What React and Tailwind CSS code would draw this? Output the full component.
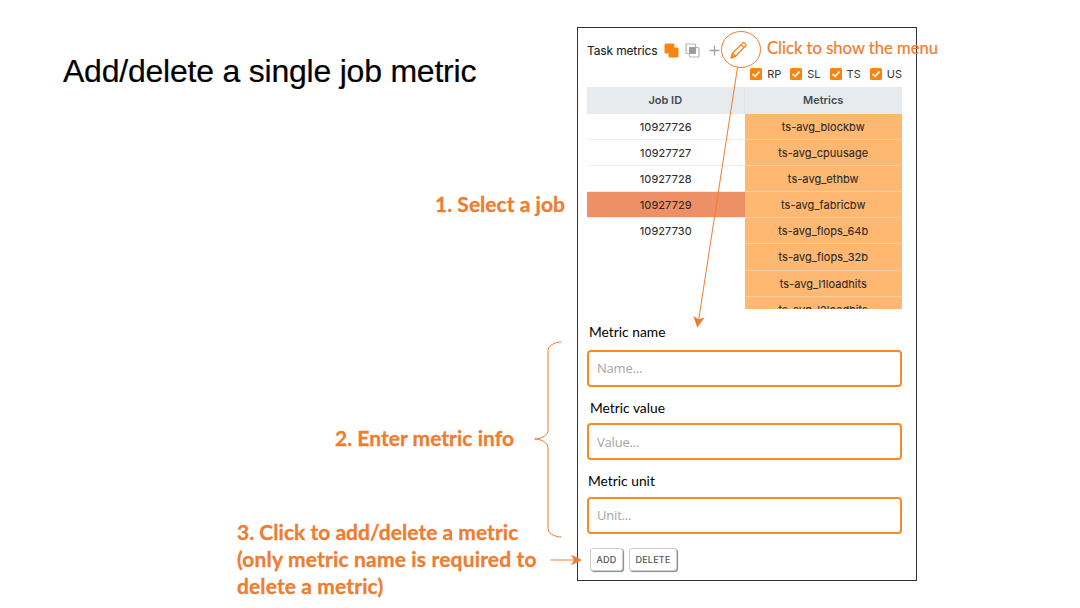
const jobs = ["10927726", "10927727", "10927728", "10927729", "10927730"];
const metrics = [
  "ts-avg_blockbw",
  "ts-avg_cpuusage",
  "ts-avg_ethbw",
  "ts-avg_fabricbw",
  "ts-avg_flops_64b",
  "ts-avg_flops_32b",
  "ts-avg_l1loadhits",
  "ts-avg_l2loadhits",
];

function Check({ label }) {
  return (
    <label className="flex items-center gap-[5px] text-[11px] leading-[14px] text-[#333]">
      <svg viewBox="0 0 12 12" className="h-3 w-3">
        <rect width="12" height="12" rx="1.5" fill="#f98510" />
        <path d="M2.6 6l2.4 2.4 4.5-4.8" fill="none" stroke="#fff" strokeWidth="1.7" />
      </svg>
      <span>{label}</span>
    </label>
  );
}

function Toolbar() {
  return (
    <div className="flex h-6 items-center">
      <span className="w-[77px] whitespace-nowrap pt-px text-[12px] tracking-[-0.15px] text-[#222] [-webkit-text-stroke:0.1px_#222]">
        Task metrics
      </span>
      <svg viewBox="0 0 15 15" className="h-[15px] w-[15px]">
        <path d="M2 .5h7a1.500 1.500 0 0 1 1.500 1.500v2.500h2.700a1.300 1.300 0 0 1 1.300 1.300v7.200a1.500 1.500 0 0 1-1.500 1.500H6a1.500 1.500 0 0 1-1.500-1.500v-2.500H2a1.500 1.500 0 0 1-1.500-1.500V2A1.500 1.500 0 0 1 2 .5z" fill="#f98510" />
      </svg>
      <svg viewBox="0 0 15 15" className="ml-[6px] h-[15px] w-[15px]" fill="none" stroke="#b5b5b5" strokeWidth="1.200">
        <rect x="1" y="1" width="9.500" height="9.500" rx="1" />
        <rect x="4.500" y="4.500" width="9.500" height="9.500" rx="1" />
        <rect x="4.200" y="4.200" width="6.600" height="6.600" fill="#999" stroke="none" />
      </svg>
      <svg viewBox="0 0 11 11" className="ml-[9px] h-[11px] w-[11px]">
        <path d="M5.500 .5v10M.5 5.500h10" stroke="#a3a3a3" strokeWidth="1.300" />
      </svg>
      <svg viewBox="0 0 18 18" className="ml-[10px] h-[18px] w-[18px]" fill="none" stroke="#f98510" strokeWidth="1.300" strokeLinejoin="round">
        <path d="M1.200 16.800l1.300-4.500L12.900 1.900a1 1 0 0 1 1.400 0l1.500 1.500a1 1 0 0 1 0 1.400L5.500 15.300z" />
        <path d="M11.200 3.600l3 3M2.500 12.300l3 3" />
        <path d="M1.200 16.800l.7-2.500 1.800 1.800z" fill="#f98510" />
      </svg>
    </div>
  );
}

function Field({ label, placeholder, className, labelClass }) {
  return (
    <label className={`block ${className}`}>
      <span className={`block h-5 text-[13.8px] leading-5 text-black font-[Lato,sans-serif] ${labelClass}`}>{label}</span>
      <input
        placeholder={placeholder}
        className="block h-[37px] w-[315px] rounded-[4px] border-2 border-[#f78d20] bg-white px-[8px] pb-[2px] text-[13px] tracking-[-0.2px] font-['Open_Sans',sans-serif] placeholder:text-[#a6a6a6]"
      />
    </label>
  );
}

function ActionButton({ children, className }) {
  return (
    <button className={`h-[23px] rounded-[3px] border border-[#ccc] bg-white text-[9px] leading-none tracking-[0.25px] text-[#555] shadow-[1px_1px_1px_#888] [-webkit-text-stroke:0.2px_#555] ${className}`}>
      {children}
    </button>
  );
}

function Panel() {
  return (
    <section className="flex h-[554px] w-[340px] flex-col border border-[#333] pl-[9px] pr-[14px] pt-[10px] font-[Inter,sans-serif]">
      <Toolbar />
      <div className="mt-[5px] flex h-[14px] justify-end gap-[9px]">
        <Check label="RP" />
        <Check label="SL" />
        <Check label="TS" />
        <Check label="US" />
      </div>
      <div className="mt-[6px] grid h-[27px] shrink-0 grid-cols-2 bg-[#e8ebee] text-center text-[11px] font-semibold leading-[27px] text-[#444a54]">
        <div className="border-r border-[#dfe3e6]">Job ID</div>
        <div>Metrics</div>
      </div>
      <div className="grid h-[195px] shrink-0 grid-cols-2 overflow-hidden text-center text-[11px] leading-[27px] text-[#2c2c2c] [-webkit-text-stroke:0.1px_#2c2c2c]">
        <div>
          {jobs.map((job, i) => (
            <div
              key={job}
              className={`h-[26.100px] tracking-[0.1px] ${i === 3 ? "bg-[#ee9065]" : ""} ${i < 4 ? "border-b border-[#eee]" : ""}`}
            >
              {job}
            </div>
          ))}
        </div>
        <div>
          {metrics.map((metric) => (
            <div key={metric} className="h-[26.100px] border-b border-[#f1d0a8] bg-[#ffb872] tracking-[0.05px]">
              {metric}
            </div>
          ))}
        </div>
      </div>
      <Field label="Metric name" placeholder="Name..." className="mt-[13px] [&>input]:mt-[8px]" labelClass="pl-[2px]" />
      <Field label="Metric value" placeholder="Value..." className="mt-[11px] [&>input]:mt-[5px] [&>input]:pb-0" labelClass="pl-[3px]" />
      <Field label="Metric unit" placeholder="Unit..." className="mt-[11px] [&>input]:mt-[6px]" labelClass="pl-[1px]" />
      <div className="mt-[14px] flex gap-[6px] pl-[3px]">
        <ActionButton className="w-[33px]">ADD</ActionButton>
        <ActionButton className="w-[48px]">DELETE</ActionButton>
      </div>
    </section>
  );
}

function Connectors() {
  return (
    <svg viewBox="0 0 1080 608" className="pointer-events-none absolute inset-0 h-[608px] w-[1080px]" fill="none" stroke="#ed7d31">
      <ellipse cx="741" cy="49.500" rx="19.500" ry="18" strokeWidth="1" />
      <path d="M737.500 67.500L698.500 321" strokeWidth="1" />
      <path d="M697.300 327.500l-4-11.500 5.300 3.200 6-1.600z" fill="#ed7d31" stroke="none" />
      <path d="M561.500 342c-7.500 0-13.500 4-13.500 9v79c0 5-6 9-13.500 9c7.500 0 13.500 4 13.500 9v80c0 5 6 9 13.500 9" strokeWidth="1" />
      <path d="M550.500 560H577" strokeWidth="1" />
      <path d="M582 560l-11-5.200 3 5.200-3 5.200z" fill="#ed7d31" stroke="none" />
    </svg>
  );
}

export default function App() {
  return (
    <main className="relative flex h-[608px] w-[1080px] overflow-hidden bg-white">
      <div className="flex w-[577px] shrink-0 flex-col font-[Lato,sans-serif] text-[21px] font-bold leading-[27px] tracking-[0.03px] text-[#ed7d31] [-webkit-text-stroke:0.3px_#ed7d31]">
        <h1 className="ml-[63px] mt-[51px] h-10 whitespace-nowrap font-['Liberation_Sans',sans-serif] text-[32px] font-normal leading-10 tracking-[-0.220px] text-black [-webkit-text-stroke:0.2px_#000]">
          Add/delete a single job metric
        </h1>
        <p className="ml-[435px] mt-[99px] whitespace-nowrap">1. Select a job</p>
        <p className="ml-[335px] mt-[207px] whitespace-nowrap">2. Enter metric info</p>
        <p className="ml-[237px] mt-[67px] whitespace-nowrap">
          3. Click to add/delete a metric
          <br />
          <span className="tracking-[0.17px]">(only metric name is required to</span>
          <br />
          <span className="tracking-[0.12px]">delete a metric)</span>
        </p>
      </div>
      <div className="pt-[27px]">
        <Panel />
      </div>
      <Connectors />
      <p className="absolute left-[767px] top-[38px] whitespace-nowrap font-[Lato,sans-serif] text-[16.600px] leading-5 text-[#ed7d31] [-webkit-text-stroke:0.2px_#ed7d31]">
        Click to show the menu
      </p>
    </main>
  );
}
